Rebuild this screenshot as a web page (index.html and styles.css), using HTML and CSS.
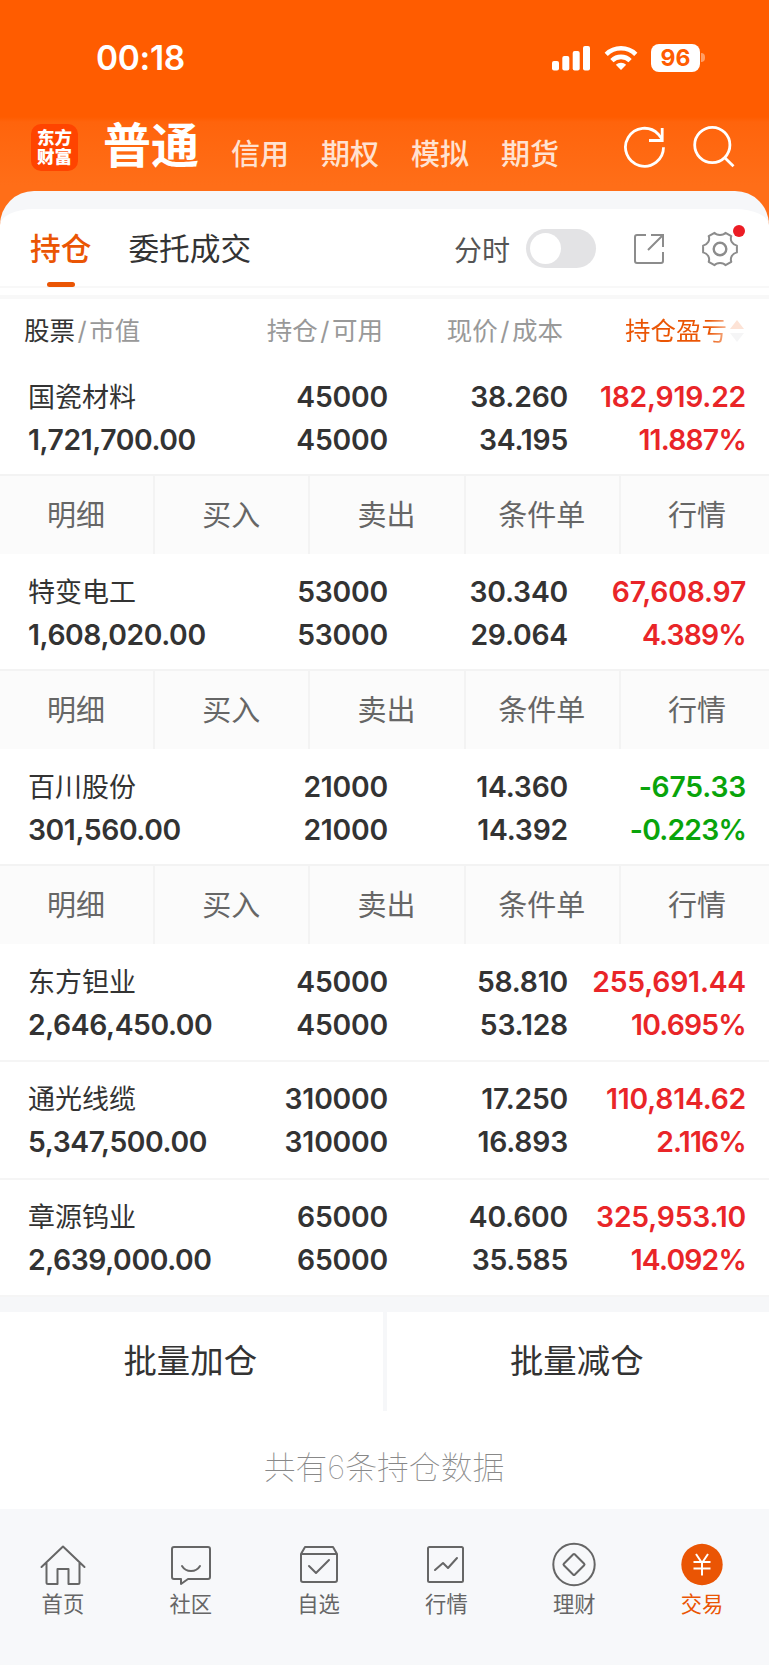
FILE: index.html
```html
<!DOCTYPE html>
<html lang="zh-CN">
  <head>
    <meta charset="UTF-8" />
    <meta name="viewport" content="width=device-width, initial-scale=1.0" />
    <title>持仓</title>
    <link rel="stylesheet" href="styles.css">
  </head>
  <body>
    <header class="top">
      <div class="status">
        <span class="time">00:18</span>
        <svg class="signal" width="38" height="26" viewBox="0 0 38 26" fill="#fff">
          <rect x="0" y="16" width="7" height="9.5" rx="2" />
          <rect x="10.3" y="11" width="7" height="14.5" rx="2" />
          <rect x="20.7" y="6" width="7" height="19.5" rx="2" />
          <rect x="31" y="1" width="7" height="24.5" rx="2" />
        </svg>
        <svg class="wifi" width="34" height="26" viewBox="0 0 34 26" fill="none" stroke="#fff" stroke-width="4.6">
          <path d="M2.2 9.3a21.3 21.3 0 0 1 29.6 0" />
          <path d="M7.900 15.600a12.900 12.900 0 0 1 18.200 0" />
          <path d="M17 25l-5.200-5.200a7.400 7.400 0 0 1 10.400 0z" fill="#fff" stroke="none" />
        </svg>
        <span class="battery">96</span>
        <i class="battery-tip"></i>
      </div>
      <nav class="accounts">
        <div class="logo"><span>东方</span><span>财富</span></div>
        <a class="account current">普通</a>
        <a class="account">信用</a>
        <a class="account">期权</a>
        <a class="account">模拟</a>
        <a class="account">期货</a>
        <svg class="refresh" width="44" height="44" viewBox="0 0 44 44" fill="none" stroke="#fff" stroke-width="2.8">
          <path d="M41.5 22.2A19 19 0 1 1 36.3 9.2L40 14" />
          <path d="M40.2 3v12.500H27" />
        </svg>
        <svg class="search" width="44" height="44" viewBox="0 0 44 44" fill="none" stroke="#fff" stroke-width="2.8">
          <circle cx="20.3" cy="20" r="17.6" />
          <path d="M32.3 32.2l9.2 9" />
        </svg>
      </nav>
    </header>

    <main class="sheet">
      <div class="tabs">
        <a class="tab active">持仓</a>
        <a class="tab">委托成交</a>
        <span class="minute">分时</span>
        <span class="switch"></span>
        <svg class="export" width="32" height="32" viewBox="0 0 32 32" fill="none" stroke="#8c8c8c" stroke-width="2">
          <path d="M13 2H4Q2 2 2 4v24q0 2 2 2h24q2 0 2-2v-9" />
          <path d="M18 2h12v12M30 2L15 17" />
        </svg>
        <div class="gear">
          <svg width="38" height="38" viewBox="0 0 38 38" fill="none" stroke="#8c8c8c" stroke-width="2" stroke-linejoin="round">
            <path d="M13.5 2.8C15.5 5.8 22.5 5.8 24.5 2.8L30.3 6.2C28.8 10.2 31.2 14.5 35.9 15.6V22.4C31.2 23.5 28.8 27.8 30.3 31.8L24.5 35.2C22.5 32.2 15.5 32.2 13.5 35.2L7.7 31.8C9.2 27.8 6.8 23.5 2.1 22.4V15.6C6.8 14.5 9.2 10.2 7.7 6.2Z" />
            <circle cx="19" cy="19" r="6.3" stroke-width="2.4" />
          </svg>
          <i class="dot"></i>
        </div>
      </div>

      <div class="gap-line"></div>

      <div class="cols head">
        <span><b>股票</b><i>/</i>市值</span>
        <span>持仓<i>/</i>可用</span>
        <span>现价<i>/</i>成本</span>
        <span class="sort">持仓盈亏<svg width="16" height="22" viewBox="0 0 16 22"><path d="M8 0l7 9H1z" fill="#fde3d6" /><path d="M8 22l7-9H1z" fill="#f5f5f6" /></svg></span>
      </div>

      <section class="stock">
        <div class="cols">
          <span class="name">国瓷材料</span><span>45000</span><span>38.260</span><span class="up">182,919.22</span>
          <span class="value">1,721,700.00</span><span>45000</span><span>34.195</span><span class="rate up">11.887%</span>
        </div>
        <div class="actions"><a>明细</a><a>买入</a><a>卖出</a><a>条件单</a><a>行情</a></div>
      </section>

      <section class="stock">
        <div class="cols">
          <span class="name">特变电工</span><span>53000</span><span>30.340</span><span class="up">67,608.97</span>
          <span class="value">1,608,020.00</span><span>53000</span><span>29.064</span><span class="rate up">4.389%</span>
        </div>
        <div class="actions"><a>明细</a><a>买入</a><a>卖出</a><a>条件单</a><a>行情</a></div>
      </section>

      <section class="stock">
        <div class="cols">
          <span class="name">百川股份</span><span>21000</span><span>14.360</span><span class="down">-675.33</span>
          <span class="value">301,560.00</span><span>21000</span><span>14.392</span><span class="rate down">-0.223%</span>
        </div>
        <div class="actions"><a>明细</a><a>买入</a><a>卖出</a><a>条件单</a><a>行情</a></div>
      </section>

      <section class="stock closed">
        <div class="cols">
          <span class="name">东方钽业</span><span>45000</span><span>58.810</span><span class="up">255,691.44</span>
          <span class="value">2,646,450.00</span><span>45000</span><span>53.128</span><span class="rate up">10.695%</span>
        </div>
      </section>

      <section class="stock closed">
        <div class="cols">
          <span class="name">通光线缆</span><span>310000</span><span>17.250</span><span class="up">110,814.62</span>
          <span class="value">5,347,500.00</span><span>310000</span><span>16.893</span><span class="rate up">2.116%</span>
        </div>
      </section>

      <section class="stock closed">
        <div class="cols">
          <span class="name">章源钨业</span><span>65000</span><span>40.600</span><span class="up">325,953.10</span>
          <span class="value">2,639,000.00</span><span>65000</span><span>35.585</span><span class="rate up">14.092%</span>
        </div>
      </section>

      <div class="batch">
        <a>批量加仓</a>
        <a>批量减仓</a>
      </div>
      <p class="total">共有6条持仓数据</p>
    </main>

    <footer class="tabbar">
      <a>
        <svg width="46" height="46" viewBox="0 0 46 46">
          <path d="M1.5 25L23 4.5 44.5 25M6.5 21v19.5q0 1.5 1.5 1.5h9.500V27h11v15H38q1.500 0 1.500-1.500V21" />
        </svg>
        首页
      </a>
      <a>
        <svg width="46" height="46" viewBox="0 0 46 46">
          <path d="M6 5h34q2 0 2 2v28q0 2-2 2H20L13 42v-5H6q-2 0-2-2V7q0-2 2-2z" />
          <path d="M14 24q3 5 9 5t9-5" />
        </svg>
        社区
      </a>
      <a>
        <svg width="46" height="46" viewBox="0 0 46 46">
          <path d="M5 12l4-7h28l4 7v26q0 2-2 2H7q-2 0-2-2zH41" />
          <path d="M13 24l7 7L33 18" />
        </svg>
        自选
      </a>
      <a>
        <svg width="46" height="46" viewBox="0 0 46 46">
          <rect x="5" y="5" width="35" height="35" rx="1.5" />
          <path d="M12 28l8-7 5 5L34 16" />
        </svg>
        行情
      </a>
      <a>
        <svg width="46" height="46" viewBox="0 0 46 46">
          <circle cx="23" cy="22.5" r="20.700" />
          <rect x="15.300" y="14.800" width="15.400" height="15.400" rx="1" transform="rotate(45 23 22.5)" />
        </svg>
        理财
      </a>
      <a class="on">
        <svg width="46" height="46" viewBox="0 0 46 46">
          <circle class="disc" cx="23" cy="22.5" r="20.700" />
          <path class="yen" d="M17 12l6 9 6-9M14.500 20h17M14.500 26.500h17M23 21v12.500" />
        </svg>
        交易
      </a>
    </footer>
  </body>
</html>
```
FILE: styles.css
```css
* {
  box-sizing: border-box;
}

body {
  margin: 0;
  width: 769px;
  height: 1665px;
  display: flex;
  flex-direction: column;
  overflow: hidden;
  background: #fff;
  color: #333;
  font-family: Inter, "Noto Sans CJK SC", sans-serif;
}

i {
  font-style: normal;
}

svg {
  flex: none;
}

/* Header */
.top {
  flex: none;
  height: 232px;
  background: linear-gradient(#ff5c00 117px, #ff640c 122px, #ff6e18 185px);
  color: #fff;
}

.status {
  height: 117px;
  padding: 0 64px 2px 96px;
  display: flex;
  align-items: center;
}

.time {
  flex: 1;
  font-size: 33.5px;
  font-weight: 560;
  letter-spacing: -0.3px;
}

.signal {
  margin-right: 14px;
}

.wifi {
  margin-right: 13px;
}

.battery {
  width: 49px;
  height: 28px;
  border-radius: 8px;
  background: #fff;
  color: #ff5c00;
  font-size: 23px;
  font-weight: 650;
  line-height: 28px;
  text-align: center;
}

.battery-tip {
  width: 4px;
  height: 9px;
  margin-left: 1px;
  border-radius: 0 4px 4px 0;
  background: #ff9e66;
}

.accounts {
  height: 60px;
  padding-left: 31px;
  display: flex;
  align-items: center;
}

.logo {
  width: 47px;
  height: 47px;
  margin-right: 25px;
  padding-top: 4px;
  border-radius: 10px;
  background: #ff4400;
  font-size: 17.5px;
  font-weight: 900;
  line-height: 19px;
  text-align: center;
}

.logo span {
  display: block;
}

.account {
  width: 90px;
  padding: 15px 0 0 1px;
  font-size: 29px;
  font-weight: 500;
  line-height: 42px;
  color: #ffe2d1;
}

.account.current {
  width: 127px;
  padding: 0 0 2px;
  font-size: 48px;
  font-weight: 700;
  line-height: 60px;
  color: #fff;
}

.refresh {
  margin-left: 32px;
}

.search {
  margin-left: 26px;
}

/* Sheet */
.sheet {
  flex: none;
  height: 1318px;
  margin-top: -41px;
  border-top: 18px solid #f6f7f9;
  border-radius: 34px 34px 0 0;
  background: #fff;
}

.tabs {
  height: 77px;
  padding: 2px 30px 0 30px;
  display: flex;
  align-items: center;
}

.tab {
  height: 75px;
  margin-right: 37px;
  font-size: 30.7px;
  line-height: 75px;
}

.tab.active {
  color: #ea5504;
  font-weight: 500;
}

.tab.active::after {
  content: "";
  display: block;
  width: 28px;
  height: 5px;
  margin: -4px auto 0;
  border-radius: 3px;
  background: #ea5504;
}

.minute {
  margin-left: auto;
  font-size: 28px;
  color: #555;
}

.switch {
  width: 70px;
  height: 39px;
  margin: 0 37px 0 16px;
  padding: 4px;
  border-radius: 20px;
  background: #e3e3e5;
}

.switch::before {
  content: "";
  display: block;
  width: 31px;
  height: 31px;
  border-radius: 50%;
  background: #fff;
}

.gear {
  position: relative;
  height: 38px;
  margin-left: 36px;
}

.dot {
  position: absolute;
  top: -5px;
  right: -6px;
  width: 12px;
  height: 12px;
  border-radius: 50%;
  background: #ec1c24;
}

.gap-line {
  height: 13px;
  border-top: 2px solid #f8f8f8;
  border-bottom: 4px solid #f8f8f8;
}

/* Holdings */
.cols {
  height: 115px;
  padding: 16px 23px 0 28px;
  display: grid;
  grid-template-columns: 200px 160px 180px 178px;
  grid-auto-rows: 43px;
  line-height: 43px;
  font-size: 28.3px;
  font-weight: 560;
  letter-spacing: -0.2px;
  text-align: right;
}

.cols > :nth-child(4n + 1) {
  text-align: left;
}

.cols .name {
  font-size: 27px;
  font-weight: 400;
  letter-spacing: 0;
}

.cols .value {
  letter-spacing: -0.4px;
}

.cols .rate {
  letter-spacing: -0.8px;
}

.head {
  height: 61px;
  padding: 10px 24px 0 24px;
  grid-template-columns: 200px 159px 180px 182px;
  font-size: 25.5px;
  font-weight: 400;
  letter-spacing: 0;
  color: #999;
}

.head b {
  font-weight: 400;
  color: #333;
}

.head i {
  margin: 0 2.5px;
}

.sort {
  display: flex;
  align-items: center;
  justify-content: flex-end;
  background: linear-gradient(90deg, #ea5504 80%, #fff 98%);
  background-clip: text;
  -webkit-background-clip: text;
  color: transparent;
}

.sort svg {
  margin-left: 2px;
}

.up {
  color: #e92528;
}

.down {
  color: #09a40b;
}

.actions {
  height: 80px;
  margin-top: -1px;
  margin-bottom: 1px;
  overflow: hidden;
  display: grid;
  grid-template-columns: 155px repeat(4, 155.3px);
  border-top: 2px solid #f3f3f3;
  background: #fbfbfb;
  color: #666;
  font-size: 29px;
  line-height: 79px;
  text-align: center;
}

.actions a {
  padding-right: 1px;
  border-right: 2px solid #f3f3f3;
}

.closed {
  height: 117.3px;
  border-bottom: 2px solid #f5f5f5;
}

.batch {
  height: 114px;
  display: flex;
  gap: 4px;
  border-top: 15px solid #f6f7f9;
  background: #f6f7f9;
}

.batch a {
  flex: 1;
  padding-right: 2px;
  background: #fff;
  font-size: 33.4px;
  line-height: 98px;
  text-align: center;
}

.total {
  margin: 0;
  padding: 33px 1px 0 0;
  color: #888;
  font-size: 31.8px;
  font-weight: 100;
  line-height: 48px;
  text-align: center;
}

/* Bottom navigation */
.tabbar {
  flex: 1;
  padding: 33px 2px 0 0;
  display: grid;
  grid-template-columns: repeat(6, 1fr);
  background: #f7f8fa;
  color: #666;
  font-size: 21.3px;
  line-height: 32px;
  text-align: center;
}

.tabbar a {
  padding-right: 2px;
}

.tabbar svg {
  display: block;
  margin: 0 auto;
  fill: none;
  stroke: #666;
  stroke-width: 2;
  stroke-linecap: round;
  stroke-linejoin: round;
}

.tabbar .on {
  color: #ea5504;
}

.tabbar .disc {
  fill: #ea5504;
  stroke: none;
}

.tabbar .yen {
  stroke: #fff;
  stroke-linecap: butt;
}
```
